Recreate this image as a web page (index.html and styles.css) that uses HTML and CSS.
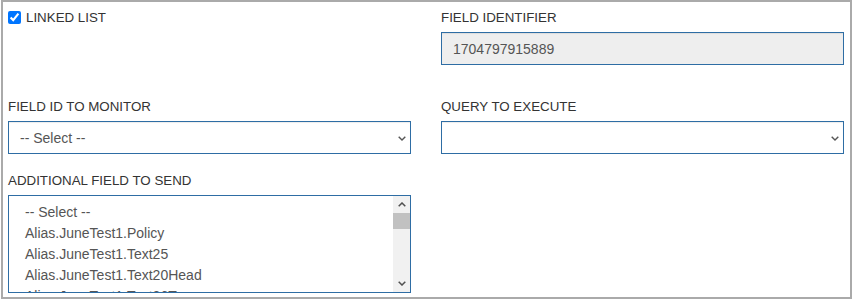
FILE: index.html
```html
<!DOCTYPE html>
<html lang="en">
    <head>
        <meta charset="UTF-8" />
        <title>Linked list field</title>
        <link rel="stylesheet" href="styles.css">
    </head>

    <body>
        <form class="panel">
            <!-- 1줄: 체크박스 / 필드 식별자 -->
            <div class="row row-top">
                <div class="field">
                    <label class="check">
                        <input type="checkbox" checked />
                        <span>LINKED LIST</span>
                    </label>
                </div>
                <div class="field">
                    <label class="lbl" for="fieldId">FIELD IDENTIFIER</label>
                    <input id="fieldId" class="control" type="text" value="1704797915889" readonly />
                </div>
            </div>

            <!-- 2줄: 셀렉트 두개 -->
            <div class="row row-mid">
                <div class="field">
                    <label class="lbl" for="monitor">FIELD ID TO MONITOR</label>
                    <div class="select-wrap">
                        <select id="monitor" class="control">
                            <option>-- Select --</option>
                        </select>
                        <svg class="caret" width="8" height="5" viewBox="0 0 8 5">
                            <path d="M0.7 0.7 L4 4 L7.3 0.7" fill="none" stroke="#555" stroke-width="1.4" />
                        </svg>
                    </div>
                </div>
                <div class="field">
                    <label class="lbl" for="query">QUERY TO EXECUTE</label>
                    <div class="select-wrap">
                        <select id="query" class="control">
                            <option></option>
                        </select>
                        <svg class="caret" width="8" height="5" viewBox="0 0 8 5">
                            <path d="M0.7 0.7 L4 4 L7.3 0.7" fill="none" stroke="#555" stroke-width="1.4" />
                        </svg>
                    </div>
                </div>
            </div>

            <!-- 3줄: 리스트박스 -->
            <div class="row">
                <div class="field">
                    <label class="lbl">ADDITIONAL FIELD TO SEND</label>
                    <div class="listbox">
                        <div class="opts">
                            <div class="opt">-- Select --</div>
                            <div class="opt">Alias.JuneTest1.Policy</div>
                            <div class="opt">Alias.JuneTest1.Text25</div>
                            <div class="opt">Alias.JuneTest1.Text20Head</div>
                            <div class="opt">Alias.JuneTest1.Text26T</div>
                        </div>
                        <div class="sbar">
                            <div class="sbtn">
                                <svg width="8" height="5" viewBox="0 0 8 5">
                                    <path d="M0.7 4.3 L4 1 L7.3 4.3" fill="none" stroke="#505050" stroke-width="1.5" />
                                </svg>
                            </div>
                            <div class="thumb"></div>
                            <div class="track"></div>
                            <div class="sbtn">
                                <svg width="8" height="5" viewBox="0 0 8 5">
                                    <path d="M0.7 0.7 L4 4 L7.3 0.7" fill="none" stroke="#505050" stroke-width="1.5" />
                                </svg>
                            </div>
                        </div>
                    </div>
                </div>
                <div class="field"></div>
            </div>
        </form>
    </body>
</html>
```

FILE: styles.css
```css
body {
    margin: 0;
    background-color: #fff;
    font-family: "Liberation Sans", Arial, sans-serif;
}

/* 바깥 테두리 박스 */
.panel {
    box-sizing: border-box;
    width: 851px;
    height: 299px;
    margin: 0 0 0 1px;
    padding: 8px 6px 0 5px;
    border: 2px solid #aaa;
}

.row {
    display: grid;
    grid-template-columns: 403px 403px;
    column-gap: 30px;
}
.row-top {
    margin-bottom: 34px;
}
.row-mid {
    margin-bottom: 19px;
}

.lbl {
    display: block;
    margin-bottom: 7px;
    font-size: 13.33px;
    line-height: 15px;
    color: #333;
}

/* 체크박스 라벨 */
.check {
    display: flex;
    align-items: center;
    gap: 5px;
    height: 15px;
    font-size: 13.33px;
    line-height: 15px;
    color: #333;
}
.check input {
    width: 13px;
    height: 13px;
    margin: 0;
}

.control {
    box-sizing: border-box;
    display: block;
    width: 100%;
    height: 33px;
    margin: 0;
    padding: 0 11px;
    border: 1px solid #2e6da4;
    border-radius: 0;
    background-color: #fff;
    box-shadow: inset 0 1px 1px rgba(0, 0, 0, 0.075);
    font-family: "Liberation Sans", Arial, sans-serif;
    font-size: 14px;
    color: #555;
    outline: none;
}
input.control {
    background-color: #eee;
}
select.control {
    appearance: none;
    -webkit-appearance: none;
}

.select-wrap {
    position: relative;
}
.caret {
    position: absolute;
    right: 5px;
    top: 15px;
    pointer-events: none;
}

/* 리스트박스 (스크롤바 포함) */
.listbox {
    box-sizing: border-box;
    display: flex;
    height: 98px;
    border: 1px solid #2e6da4;
    background-color: #fff;
}
.opts {
    flex: 1;
    overflow: hidden;
    padding: 6px 0 0 16px;
}
.opt {
    font-size: 14px;
    line-height: 21px;
    color: #555;
    white-space: nowrap;
}

.sbar {
    display: flex;
    flex-direction: column;
    width: 17px;
    background-color: #f1f1f1;
}
.sbtn {
    display: flex;
    align-items: center;
    justify-content: center;
    height: 17px;
}
.thumb {
    height: 16px;
    background-color: #c1c1c1;
}
.track {
    flex: 1;
}
```
